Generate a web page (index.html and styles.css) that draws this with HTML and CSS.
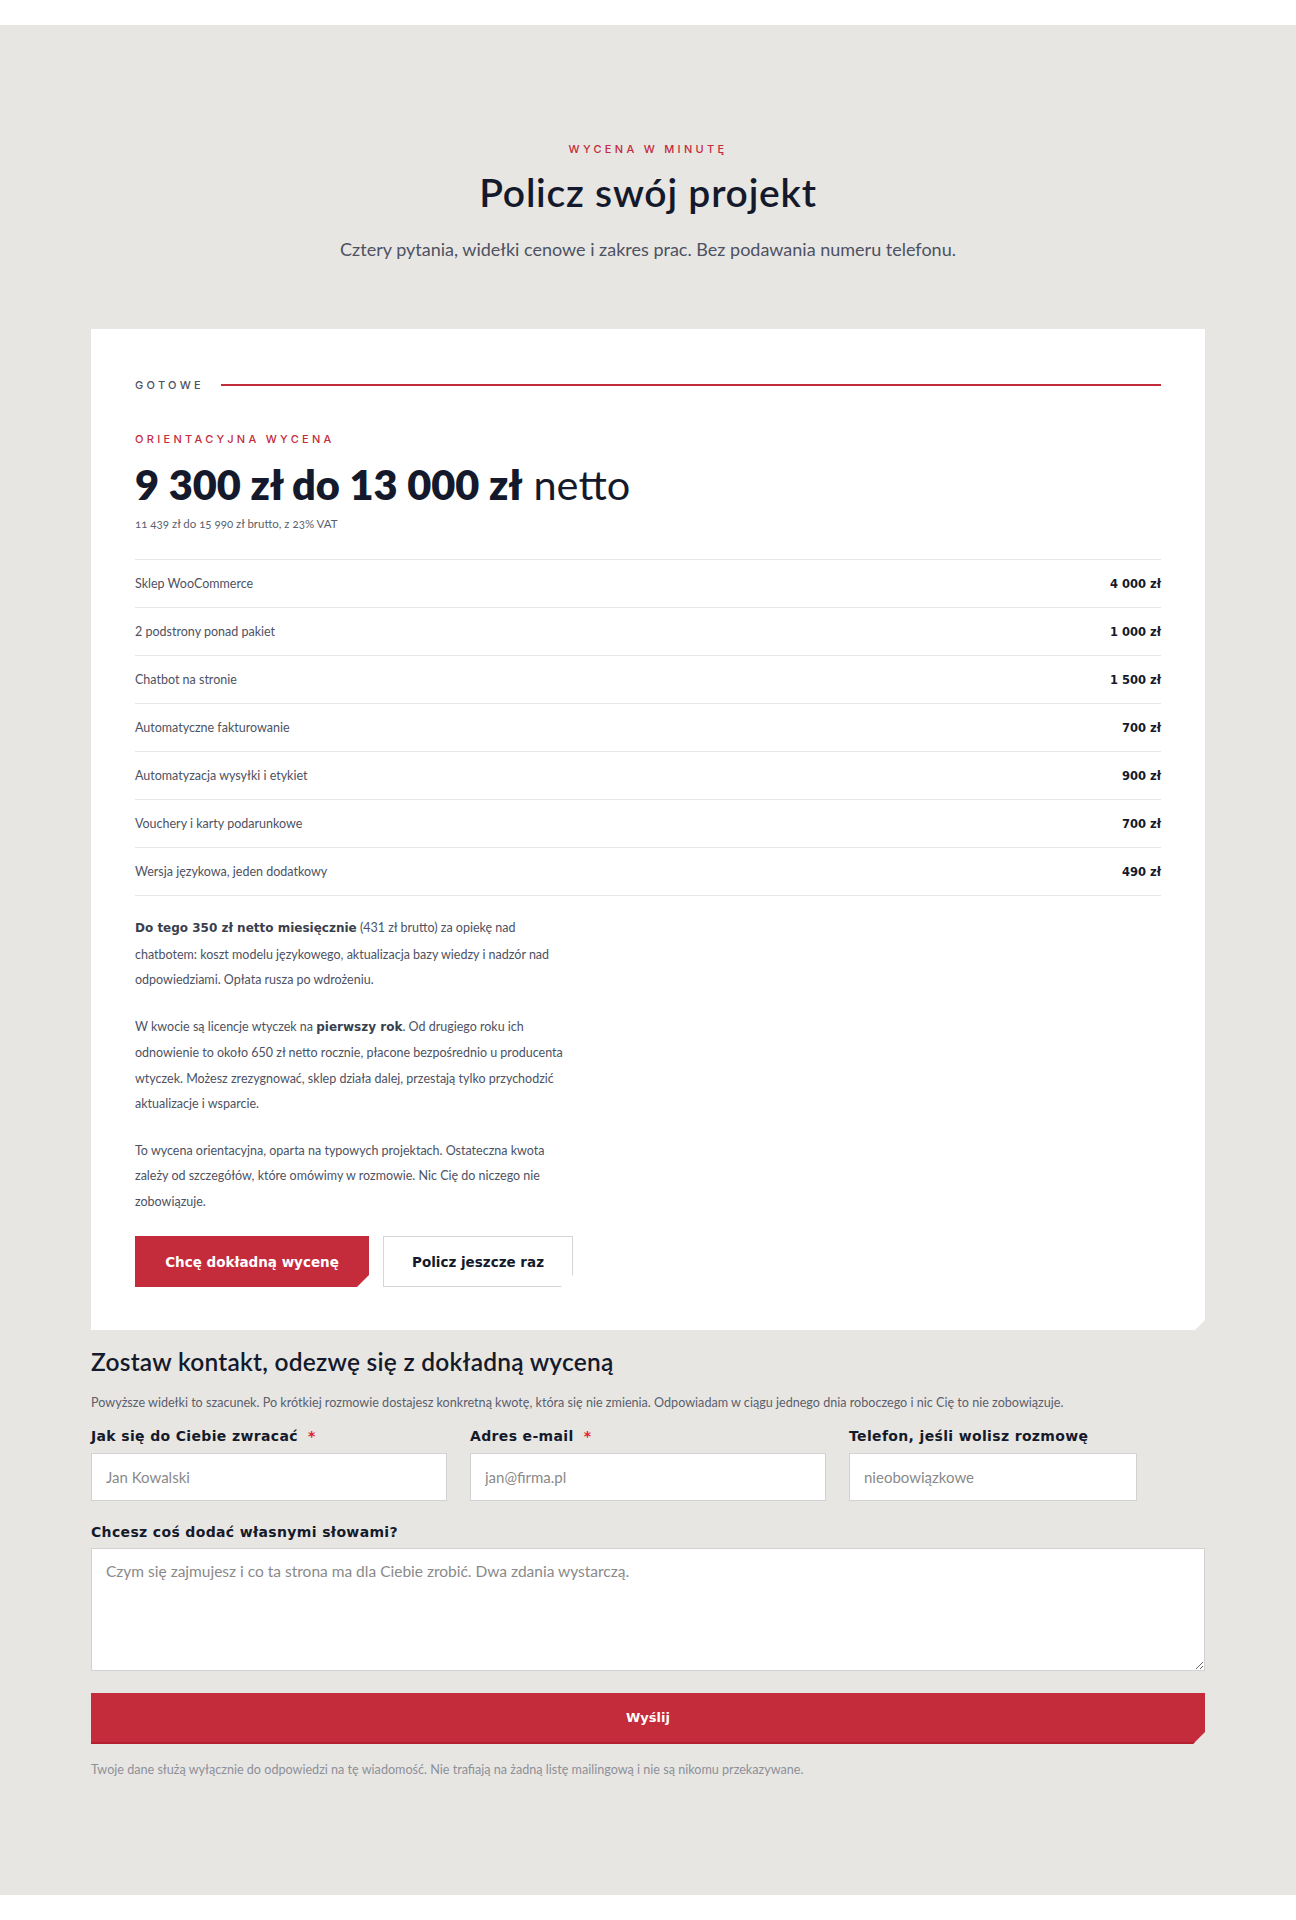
FILE: index.html
```html
<!DOCTYPE html>
<html lang="pl">
<head>
<meta charset="utf-8">
<title>Policz swój projekt</title>
<link rel="stylesheet" href="styles.css">
</head>
<body>
<div class="topbar"></div>
<main class="page">
  <header class="intro">
    <p class="eyebrow eyebrow-red">Wycena w minutę</p>
    <h1 class="title">Policz swój projekt</h1>
    <p class="lead">Cztery pytania, widełki cenowe i zakres prac. Bez podawania numeru telefonu.</p>
  </header>

  <section class="card">
    <div class="step-head">
      <span class="eyebrow eyebrow-gray">Gotowe</span>
      <span class="step-line"></span>
    </div>
    <p class="eyebrow eyebrow-red est-label">Orientacyjna wycena</p>
    <p class="price"><strong>9 300 zł do 13 000 zł</strong> netto</p>
    <p class="price-gross">11 439 zł do 15 990 zł brutto, z 23% VAT</p>

    <ul class="items">
      <li class="item"><span>Sklep WooCommerce</span><b>4 000 zł</b></li>
      <li class="item"><span>2 podstrony ponad pakiet</span><b>1 000 zł</b></li>
      <li class="item"><span>Chatbot na stronie</span><b>1 500 zł</b></li>
      <li class="item"><span>Automatyczne fakturowanie</span><b>700 zł</b></li>
      <li class="item"><span>Automatyzacja wysyłki i etykiet</span><b>900 zł</b></li>
      <li class="item"><span>Vouchery i karty podarunkowe</span><b>700 zł</b></li>
      <li class="item"><span>Wersja językowa, jeden dodatkowy</span><b>490 zł</b></li>
    </ul>

    <div class="notes">
      <p><strong>Do tego 350 zł netto miesięcznie</strong> (431 zł brutto) za opiekę nad chatbotem: koszt modelu językowego, aktualizacja bazy wiedzy i nadzór nad odpowiedziami. Opłata rusza po wdrożeniu.</p>
      <p>W kwocie są licencje wtyczek na <strong>pierwszy rok</strong>. Od drugiego roku ich odnowienie to około 650 zł netto rocznie, płacone bezpośrednio u producenta wtyczek. Możesz zrezygnować, sklep działa dalej, przestają tylko przychodzić aktualizacje i wsparcie.</p>
      <p>To wycena orientacyjna, oparta na typowych projektach. Ostateczna kwota zależy od szczegółów, które omówimy w rozmowie. Nic Cię do niczego nie zobowiązuje.</p>
    </div>

    <div class="actions">
      <a class="btn btn-primary" href="#kontakt">Chcę dokładną wycenę</a>
      <a class="btn btn-ghost" href="#">Policz jeszcze raz</a>
    </div>
  </section>

  <section class="contact" id="kontakt">
    <h2 class="contact-title">Zostaw kontakt, odezwę się z dokładną wyceną</h2>
    <p class="contact-lead">Powyższe widełki to szacunek. Po krótkiej rozmowie dostajesz konkretną kwotę, która się nie zmienia. Odpowiadam w ciągu jednego dnia roboczego i nic Cię to nie zobowiązuje.</p>
    <form class="form">
      <div class="fields">
        <label class="field">
          <span class="label">Jak się do Ciebie zwracać <i class="req">*</i></span>
          <input class="input" type="text" placeholder="Jan Kowalski">
        </label>
        <label class="field">
          <span class="label">Adres e-mail <i class="req">*</i></span>
          <input class="input" type="email" placeholder="jan@firma.pl">
        </label>
        <label class="field">
          <span class="label">Telefon, jeśli wolisz rozmowę</span>
          <input class="input input-short" type="tel" placeholder="nieobowiązkowe">
        </label>
      </div>
      <label class="field field-wide">
        <span class="label">Chcesz coś dodać własnymi słowami?</span>
        <textarea class="textarea" placeholder="Czym się zajmujesz i co ta strona ma dla Ciebie zrobić. Dwa zdania wystarczą."></textarea>
      </label>
      <button class="submit" type="button">Wyślij</button>
      <p class="privacy">Twoje dane służą wyłącznie do odpowiedzi na tę wiadomość. Nie trafiają na żadną listę mailingową i nie są nikomu przekazywane.</p>
    </form>
  </section>
</main>
<div class="bottombar"></div>
</body>
</html>
```

FILE: styles.css
```css
* { box-sizing: border-box; }

html, body {
  margin: 0;
  padding: 0;
  background: #ffffff;
}

body {
  font-family: Lato, "Noto Sans", sans-serif;
  color: #4d5263;
}

.topbar { height: 25px; background: #ffffff; }
.bottombar { height: 27px; background: #ffffff; }

.page {
  background: #e8e6e2;
  padding: 116px 0 117px;
}

.intro { text-align: center; }

.eyebrow {
  margin: 0;
  font-family: Inter, "DejaVu Sans", sans-serif;
  font-size: 11px;
  line-height: 16px;
  font-weight: 500;
  letter-spacing: 0.3em;
  text-transform: uppercase;
}
.eyebrow-red { color: #c42b3b; }
.eyebrow-gray { color: #4d5263; }

.title {
  margin: 11px 0 0;
  font-family: Lato, "Noto Sans", sans-serif;
  font-size: 39px;
  line-height: 48px;
  font-weight: 600;
  color: #141a2b;
  letter-spacing: 0.02em;
}

.lead {
  margin: 21px 0 0;
  font-size: 18px;
  line-height: 24px;
  color: #4d5263;
}

.card {
  width: 1114px;
  margin: 68px auto 0;
  background: #ffffff;
  padding: 44px 44px 43px;
  clip-path: polygon(0 0, 100% 0, 100% calc(100% - 10px), calc(100% - 10px) 100%, 0 100%);
}

.step-head {
  display: flex;
  align-items: center;
  gap: 17px;
  height: 24px;
}
.step-line {
  flex: 1;
  height: 2px;
  background: #c42b3b;
}

.est-label { margin-top: 34px; }

.price {
  margin: 13px 0 0;
  font-family: Lato, "Noto Sans", sans-serif;
  font-size: 41.5px;
  line-height: 48px;
  font-weight: 400;
  color: #141a2b;
}
.price strong { font-weight: 800; }

.price-gross {
  margin: 8px 0 0;
  font-size: 11.5px;
  line-height: 16px;
  color: #5a5f6e;
  font-variant-numeric: oldstyle-nums;
}

.items {
  list-style: none;
  margin: 27px 0 0;
  padding: 0;
  border-bottom: 1px solid #e6e6e6;
}
.item {
  display: flex;
  justify-content: space-between;
  align-items: center;
  height: 48px;
  border-top: 1px solid #e6e6e6;
  font-size: 12.5px;
  color: #4d5263;
}
.item b {
  font-family: "DejaVu Sans", Inter, sans-serif;
  font-weight: 700;
  font-size: 11.5px;
  color: #141a2b;
}

.notes {
  max-width: 432px;
  margin-top: 19px;
}
.notes p {
  margin: 0 0 21px;
  font-size: 12.5px;
  line-height: 25.5px;
  color: #4d5263;
}
.notes p:last-child { margin-bottom: 0; }
.notes strong {
  font-family: "DejaVu Sans", Inter, sans-serif;
  font-size: 12px;
  font-weight: 700;
  color: #3a3f4e;
}

.actions {
  display: flex;
  gap: 14px;
  margin-top: 22px;
}

.btn {
  display: flex;
  align-items: center;
  justify-content: center;
  height: 51px;
  font-family: "DejaVu Sans", Inter, sans-serif;
  font-size: 13.5px;
  font-weight: 700;
  text-decoration: none;
  clip-path: polygon(0 0, 100% 0, 100% calc(100% - 12px), calc(100% - 12px) 100%, 0 100%);
}
.btn-primary {
  width: 234px;
  background: #c42b3b;
  color: #ffffff;
}
.btn-ghost {
  width: 190px;
  background: #ffffff;
  color: #141a2b;
  border: 1px solid #d6d6d6;
}

.contact {
  width: 1114px;
  margin: 0 auto;
}

.contact-title {
  margin: 16px 0 0;
  font-family: Lato, "Noto Sans", sans-serif;
  font-size: 24.5px;
  line-height: 32px;
  font-weight: 600;
  letter-spacing: 0.01em;
  color: #141a2b;
}

.contact-lead {
  margin: 16px 0 0;
  font-size: 12.6px;
  line-height: 18px;
  color: #5a5f6e;
}

.form { margin: 14px 0 0; }

.fields {
  display: grid;
  grid-template-columns: repeat(3, 1fr);
  gap: 23px;
}

.field {
  display: flex;
  flex-direction: column;
  gap: 7px;
}

.label {
  font-family: "DejaVu Sans", Inter, sans-serif;
  font-size: 14px;
  line-height: 20px;
  font-weight: 700;
  letter-spacing: 0.35px;
  color: #141a2b;
}
.req {
  font-style: normal;
  color: #e0212e;
  margin-left: 5px;
}

.input {
  width: 100%;
  height: 48px;
  border: 1px solid #d2d2d2;
  background: #ffffff;
  padding: 0 14px;
  font-family: Lato, "Noto Sans", sans-serif;
  font-size: 15px;
  color: #222;
  border-radius: 0;
  outline: none;
}
.input-short { width: 288px; }

.input::placeholder,
.textarea::placeholder { color: #8a8a8a; }

.field-wide { margin-top: 21px; gap: 6px; }

.textarea {
  display: block;
  width: 100%;
  height: 123px;
  border: 1px solid #d2d2d2;
  background: #ffffff;
  padding: 12px 14px;
  font-family: Lato, "Noto Sans", sans-serif;
  font-size: 15.5px;
  line-height: 20px;
  border-radius: 0;
  outline: none;
}

.submit {
  display: block;
  width: 100%;
  height: 51px;
  margin-top: 22px;
  border: 0;
  border-bottom: 2px solid #b4202f;
  background: #c42b3b;
  color: #ffffff;
  font-family: "DejaVu Sans", Inter, sans-serif;
  font-size: 13px;
  font-weight: 700;
  cursor: pointer;
  clip-path: polygon(0 0, 100% 0, 100% calc(100% - 12px), calc(100% - 12px) 100%, 0 100%);
}

.privacy {
  margin: 18px 0 0;
  font-size: 12.6px;
  line-height: 16px;
  color: #8c909a;
}
```
